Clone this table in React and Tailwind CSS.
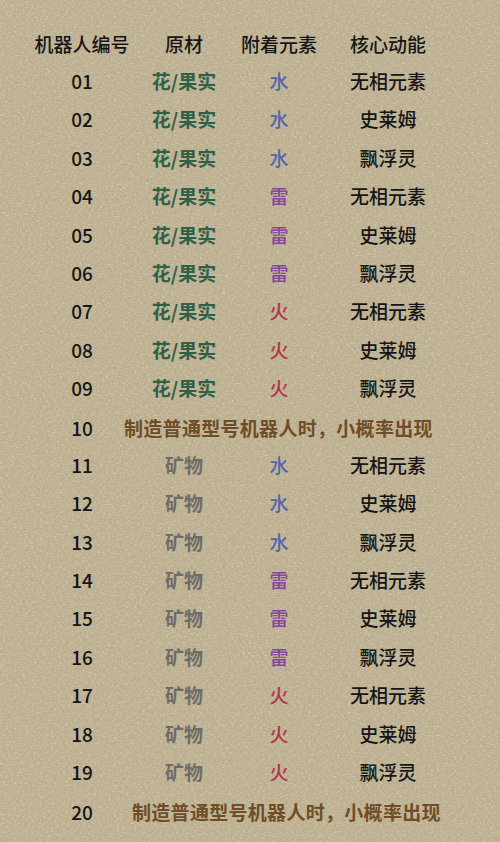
import React from "react";

const GREEN = "text-[#2f6048]";
const GRAY = "text-[#6e6c66]";
const BLUE = "text-[#5565a8]";
const PURPLE = "text-[#86479c]";
const RED = "text-[#b1364a]";

const elem = { 水: BLUE, 雷: PURPLE, 火: RED };
const cores = ["无相元素", "史莱姆", "飘浮灵"];
const elems = ["水", "雷", "火"];

function buildRows() {
  const rows = [];
  for (let i = 1; i <= 20; i++) {
    const id = String(i).padStart(2, "0");
    if (i === 10 || i === 20) {
      rows.push({ id, note: true });
      continue;
    }
    const idx = i < 10 ? i - 1 : i - 11;
    rows.push({
      id,
      mat: i < 10 ? "花/果实" : "矿物",
      matCls: i < 10 ? GREEN : GRAY,
      el: elems[Math.floor(idx / 3)],
      core: cores[idx % 3],
    });
  }
  return rows;
}

export default function App() {
  const rows = buildRows();
  return (
    <div
      className="relative w-[500px] h-[842px] overflow-hidden bg-[#bfb293]"
      style={{ fontFamily: '"Noto Sans CJK SC", "Noto Sans", sans-serif' }}
    >
      <svg className="absolute inset-0 w-full h-full pointer-events-none" width="500" height="842">
        <filter id="canvas">
          <feTurbulence type="fractalNoise" baseFrequency="0.55 0.22" numOctaves="3" seed="4" />
          <feColorMatrix
            type="matrix"
            values="0 0 0 0 0.35  0 0 0 0 0.31  0 0 0 0 0.22  0 0 0 -2.2 1.2"
          />
        </filter>
        <filter id="canvas2">
          <feTurbulence type="fractalNoise" baseFrequency="0.35 0.9" numOctaves="2" seed="9" />
          <feColorMatrix
            type="matrix"
            values="0 0 0 0 0.95  0 0 0 0 0.92  0 0 0 0 0.84  0 0 0 -2.4 1.2"
          />
        </filter>
        <rect width="500" height="842" filter="url(#canvas)" opacity="0.3" />
        <rect width="500" height="842" filter="url(#canvas2)" opacity="0.4" />
      </svg>
      <div className="relative pt-[26px] pl-[32px] font-medium text-[19px] text-[#161616]">
        <div className="grid grid-cols-[100px_104px_86px_132px] h-[36px] items-center text-center">
          <div>机器人编号</div>
          <div>原材</div>
          <div>附着元素</div>
          <div>核心动能</div>
        </div>
        {rows.map((r) =>
          r.note ? (
            <div key={r.id} className="grid grid-cols-[100px_322px] h-[38.4px] items-center">
              <div className="text-center pt-[4px]">{r.id}</div>
              <div
                className={
                  "text-[#6e4d27] font-semibold text-[19px] tracking-[0.3px] whitespace-nowrap pt-[4px] " +
                  (r.id === "10" ? "ml-[-8px]" : "ml-0")
                }
              >
                制造普通型号机器人时，小概率出现
              </div>
            </div>
          ) : (
            <div
              key={r.id}
              className="grid grid-cols-[100px_104px_86px_132px] h-[38.4px] items-center text-center"
            >
              <div>{r.id}</div>
              <div className={r.matCls + " font-semibold"}>{r.mat}</div>
              <div className={elem[r.el]}>{r.el}</div>
              <div>{r.core}</div>
            </div>
          )
        )}
      </div>
    </div>
  );
}
